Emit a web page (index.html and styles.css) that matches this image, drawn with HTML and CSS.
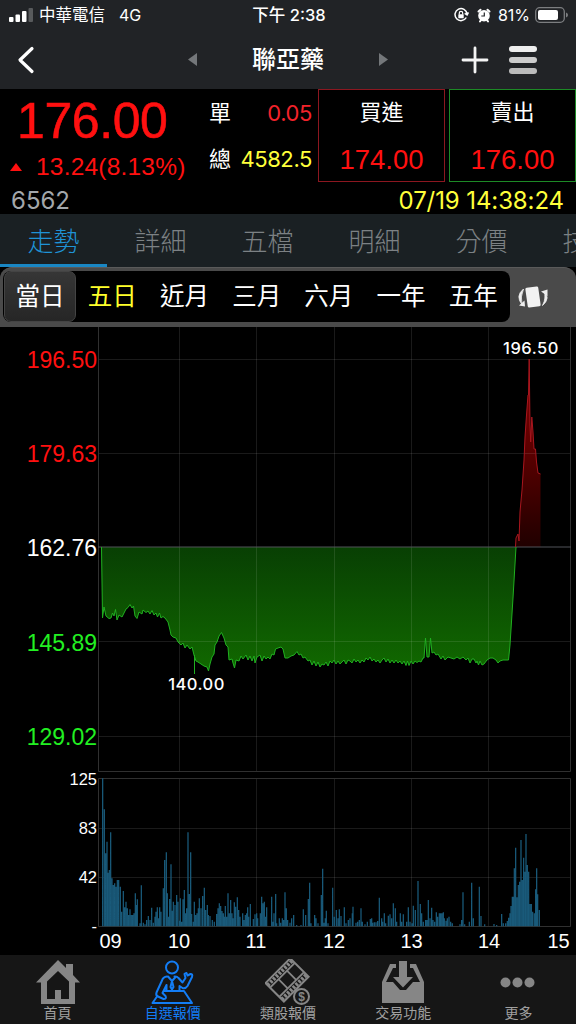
FILE: index.html
```
<!DOCTYPE html>
<html lang="zh-Hant">
<head>
  <meta charset="UTF-8">
  <meta name="viewport" content="width=device-width, initial-scale=1.0">
  <title>聯亞藥 6562</title>
  <link rel="stylesheet" href="styles.css">
</head>
<body>

<header class="top">
  <div class="status">
    <div class="status-left">
      <svg class="signal" viewBox="0 0 24 14" width="24" height="14">
        <rect x="0" y="9" width="4.5" height="5" rx="1"/>
        <rect x="6.5" y="6.500" width="4.500" height="7.500" rx="1"/>
        <rect x="13" y="3" width="4.500" height="11" rx="1"/>
        <rect x="19.500" y="0" width="4.500" height="14" rx="1" opacity=".25"/>
      </svg>
      <span class="carrier">中華電信</span>
      <span class="network">4G</span>
    </div>
    <div class="clock">下午 2:38</div>
    <div class="status-right">
      <svg width="16" height="16" viewBox="0 0 16 16" fill="none" stroke="#fff" stroke-width="1.5">
        <path d="M13.300 10.500A6 6 0 1 1 14 7M11.700 6.300l2.400 1.700 1.300-2.600"/>
        <path d="M6.300 7.500V6a1.700 1.700 0 0 1 3.400 0v1.500" stroke-width="1.200"/>
        <rect x="5.300" y="7.300" width="5.400" height="4" rx=".6" fill="#fff" stroke="none"/>
      </svg>
      <svg class="alarm" width="14" height="15" viewBox="0 0 14 15">
        <circle cx="7" cy="7.700" r="5.800" fill="#fff"/>
        <path d="M1.500 3.500 3.500 1.700M12.500 3.500l-2-1.800M3 13.500l1-1.500M11 13.500l-1-1.500" stroke="#fff" stroke-width="2" stroke-linecap="round"/>
        <path d="M7.300 4.500V8H4.300" fill="none" stroke="#212326" stroke-width="1.200"/>
      </svg>
      <span class="percent">81%</span>
      <svg width="34" height="16" viewBox="0 0 34 16">
        <rect x=".7" y=".7" width="28.600" height="14.600" rx="4" fill="none" stroke="#7c7e80" stroke-width="1.300"/>
        <rect x="3" y="3" width="20" height="10" rx="2" fill="#fff"/>
        <path d="M31 5.500q2 .6 2 2.500t-2 2.500z" fill="#7c7e80"/>
      </svg>
    </div>
  </div>
  <nav class="title-bar">
    <svg class="back" width="18" height="28" viewBox="0 0 18 28" fill="none" stroke="#fff" stroke-width="3.200" stroke-linecap="round" stroke-linejoin="round"><path d="M15 2.500 3 14l12 11.500"/></svg>
    <div class="stock-switch">
      <svg width="10" height="14" viewBox="0 0 10 14" fill="#74777a"><path d="M9 0v13L0 6.500z"/></svg>
      <h1>聯亞藥</h1>
      <svg width="10" height="14" viewBox="0 0 10 14" fill="#74777a"><path d="M1 0v13l9-6.500z"/></svg>
    </div>
    <div class="actions">
      <svg width="28" height="28" viewBox="0 0 28 28" stroke="#f4f4f4" stroke-width="2.800" stroke-linecap="round"><path d="M14 2v24M2 14h24"/></svg>
      <svg width="28" height="28" viewBox="0 0 28 28">
        <rect width="28" height="6" rx="3" fill="#eee"/>
        <rect y="11" width="28" height="6" rx="3" fill="#ccc"/>
        <rect y="22" width="28" height="6" rx="3" fill="#bbb"/>
      </svg>
    </div>
  </nav>
</header>

<section class="quote">
  <div class="last">
    <div class="price">176.00</div>
    <div class="change">
      <svg width="12" height="8" viewBox="0 0 12 8" fill="#ff1010"><path d="M6 0l6 8H0z"/></svg>
      <span>13.24(8.13%)</span>
    </div>
  </div>
  <dl class="volume">
    <dt>單</dt><dd class="single">0.05</dd>
    <dt>總</dt><dd class="total">4582.5</dd>
  </dl>
  <div class="deal buy"><span>買進</span><b>174.00</b></div>
  <div class="deal sell"><span>賣出</span><b>176.00</b></div>
  <div class="code">6562</div>
  <div class="time">07/19 14:38:24</div>
</section>

<nav class="tabs">
  <a class="active">走勢</a><a>詳細</a><a>五檔</a><a>明細</a><a>分價</a><a>技術</a>
</nav>

<div class="range-bar">
  <div class="ranges">
    <a class="selected">當日</a><a class="yellow">五日</a><a>近月</a><a>三月</a><a>六月</a><a>一年</a><a>五年</a>
  </div>
  <svg class="rotate" width="32" height="24" viewBox="0 0 32 24">
    <rect x="9.500" y="2" width="13" height="20" rx="1.500" fill="#f2f2f2" transform="rotate(-8 16 12)"/>
    <path d="M6.500 4Q-2 11 5 19.500Q3 12 6.500 4zM25.500 20.500Q34 13 27 6Q29.500 13 25.500 20.500z" fill="#eee" stroke="#eee" stroke-width=".8"/>
    <path d="M2 20.500 8 21.500l-.5-6zM24 6.500l6.500-2L30.500 11z" fill="#eee"/>
  </svg>
</div>

<svg class="chart" width="576" height="628" viewBox="0 327 576 628">
  <defs>
    <linearGradient id="down" x1="0" y1="547" x2="0" y2="672" gradientUnits="userSpaceOnUse">
      <stop offset="0" stop-color="#083f03"/>
      <stop offset="1" stop-color="#116900"/>
    </linearGradient>
    <linearGradient id="up" x1="0" y1="359" x2="0" y2="547" gradientUnits="userSpaceOnUse">
      <stop offset="0" stop-color="#8a0000"/>
      <stop offset=".6" stop-color="#4e0000"/>
      <stop offset="1" stop-color="#200000"/>
    </linearGradient>
  </defs>

  <path id="down-fill" fill="url(#down)"/>
  <path id="up-fill" fill="url(#up)"/>
  <path class="grid" d="M98 359.500h472M98 453.500h472M98 641.500h472M98 736.500h472M179.500 327v444M256.500 327v444M334.500 327v444M411.500 327v444M488.500 327v444"/>
  <path class="grid" d="M98 828.500h472M98 877.500h472M179.500 778v148M256.500 778v148M334.500 778v148M411.500 778v148M488.500 778v148"/>
  <path class="frame" d="M98.500 327v444.500h472V327M98.500 778.500h472v148h-472z"/>
  <path class="base" d="M98 547h473"/>
  <path id="down-line" class="line green"/>
  <path id="up-line" class="line dark-red"/>
  <path id="bars" transform="translate(90 770) scale(.33333)"/>

  <g class="scale">
    <text x="97" y="367.500" class="red">196.50</text>
    <text x="97" y="461.500" class="red">179.63</text>
    <text x="97" y="556">162.76</text>
    <text x="97" y="650.500" class="lime">145.89</text>
    <text x="97" y="744.500" class="lime">129.02</text>
  </g>
  <g class="mark">
    <text x="531" y="354">196.50</text>
    <text x="196.500" y="689.500">140.00</text>
  </g>
  <g class="volume-scale">
    <text x="97" y="785">125</text>
    <text x="97" y="834">83</text>
    <text x="97" y="883">42</text>
    <text x="97" y="932">-</text>
  </g>
  <g class="hours">
    <text x="110.500" y="948">09</text>
    <text x="179" y="948">10</text>
    <text x="256" y="948">11</text>
    <text x="334" y="948">12</text>
    <text x="411.500" y="948">13</text>
    <text x="489" y="948">14</text>
    <text x="558.500" y="948">15</text>
  </g>
</svg>

<footer class="menu">
  <a>
    <svg width="46" height="46" viewBox="0 0 46 46">
      <path d="M23 1 1 23.500h5V45h34V23.500h5L38 16V5h-7v4zM23 12l11 10.500V40h-8v-9h-6v9h-8V22.500z" fill="#868686" fill-rule="evenodd"/>
    </svg>
    <span>首頁</span>
  </a>
  <a class="on">
    <svg width="46" height="46" viewBox="0 0 46 46" fill="none" stroke="#137df5" stroke-width="2" stroke-linejoin="round" stroke-linecap="round">
      <circle cx="22" cy="8.500" r="6"/>
      <path d="M17 17.500q-4 .5-5 4L6.500 33.500q-1 3 1.500 4l5.500 2.500q3.500 0 2-3l-3-3 4-8V32h13v-5l3 2q3 1 5-2l4.500-9q1-3-1.500-3l-3 1.500-1-2.500-2 1 1 4-3 4.500-4-4.500q-1-1.500-4-1.500M18 17.500l4 4.500 4-4.500M22 22l-1.500 6 1.500 2.500 1.500-2.500z"/>
      <path d="M14.500 32H34l8 12H2.500L7 37.500"/>
    </svg>
    <span>自選報價</span>
  </a>
  <a>
    <svg width="46" height="46" viewBox="0 0 46 46">
      <g transform="rotate(-45 21 22)" fill="none" stroke="#868686">
        <rect x="5" y="9" width="35" height="26" stroke-width="2"/>
        <path d="M5 12h35M5 32h35" stroke-width="4" stroke-dasharray="2.500 1.500"/>
        <path d="M5 15.500h35M5 28.500h35M17 15v14M29 15v14" stroke-width="1.800"/>
      </g>
      <circle cx="36.500" cy="37.500" r="7.500" fill="#161616" stroke="#868686" stroke-width="2"/>
      <text x="36.500" y="42" class="coin">$</text>
    </svg>
    <span>類股報價</span>
  </a>
  <a>
    <svg width="46" height="46" viewBox="0 0 46 46" fill="#868686">
      <path d="M19 2h8v16h6L23 28.500 13 18h6z"/>
      <path d="M10 5h6v4h-3L6 23h7l7 8h6l7-8h7L33 9h-3V5h6l8 18v21H2V23z"/>
    </svg>
    <span>交易功能</span>
  </a>
  <a>
    <svg width="46" height="46" viewBox="0 0 46 46" fill="#868686">
      <circle cx="10.500" cy="23.500" r="5"/><circle cx="22.500" cy="23.500" r="5"/><circle cx="34.500" cy="23.500" r="5"/>
    </svg>
    <span>更多</span>
  </a>
</footer>

<script src="chart.js"></script>
</body>
</html>
```
FILE: styles.css
```
* {
  box-sizing: border-box;
}
body {
  margin: 0;
  width: 576px;
  height: 1024px;
  overflow: hidden;
  display: flex;
  flex-direction: column;
  background: #000;
  color: #fff;
  font-family: "Liberation Sans", "Noto Sans CJK TC", sans-serif;
}
svg {
  display: block;
  flex: none;
}

/* status bar and title */
.top {
  height: 89px;
  background: #212326;
}
.status {
  height: 30px;
  padding: 0 7px 0 9px;
  display: grid;
  grid-template-columns: 1fr auto 1fr;
  align-items: center;
  font-family: Inter, "Noto Sans CJK TC", sans-serif;
  font-size: 16px;
  line-height: 30px;
}
.status-left,
.status-right {
  display: flex;
  align-items: center;
}
.status-right {
  justify-content: flex-end;
}
.signal {
  fill: #fff;
}
.carrier {
  margin-left: 6px;
  font-size: 16.5px;
}
.network {
  margin-left: 14px;
}
.clock {
  font-weight: 500;
  font-size: 16.5px;
}
.alarm {
  margin-left: 8px;
}
.percent {
  margin: 0 5px 0 7px;
}
.title-bar {
  height: 59px;
  padding: 0 39px 0 17px;
  display: grid;
  grid-template-columns: 171px 200px 1fr;
  align-items: center;
}
.stock-switch {
  display: flex;
  align-items: center;
  justify-content: space-between;
}
.stock-switch h1 {
  margin: 0;
  font-size: 24px;
  font-weight: 500;
  line-height: 58px;
}
.actions {
  display: flex;
  justify-content: flex-end;
  gap: 20px;
}

/* quote */
.quote {
  height: 125px;
  display: grid;
  grid-template-columns: 206px 112px 127px 131px;
  grid-template-rows: 93px 32px;
}
.last {
  display: flex;
  flex-direction: column;
  color: #ff1010;
}
.price {
  padding: 5px 0 0 17px;
  font-size: 50px;
  line-height: 54px;
  letter-spacing: -.4px;
  -webkit-text-stroke: .6px #ff1010;
}
.change {
  padding-left: 10px;
  display: flex;
  align-items: center;
  gap: 14px;
  font-size: 24.5px;
  line-height: 37px;
  letter-spacing: .2px;
}
.volume {
  margin: 0;
  padding: 0 6px 0 3px;
  display: grid;
  grid-template-columns: 22px 1fr;
  grid-template-rows: 47px 46px;
  align-items: center;
  font-size: 22px;
}
.volume dt {
  padding-bottom: 4px;
}
.volume dd {
  margin: 0;
  text-align: right;
  font-family: Inter, sans-serif;
  letter-spacing: -.4px;
}
.volume .single {
  color: #f3232b;
}
.volume .total {
  color: #ffff3a;
}
.deal {
  border: 1px solid #8c1720;
  display: flex;
  flex-direction: column;
  align-items: center;
  font-size: 22px;
}
.deal.sell {
  margin-left: 4px;
  border-color: #1d8a26;
}
.deal span {
  line-height: 46px;
}
.deal b {
  font-size: 27.5px;
  font-weight: normal;
  line-height: 48px;
  color: #ff1010;
}
.code,
.time {
  font-family: Inter, sans-serif;
  font-size: 24px;
  line-height: 38px;
}
.code {
  padding-left: 11px;
  color: #a3a7ab;
}
.time {
  grid-column: 2 / 5;
  padding-right: 12px;
  text-align: right;
  letter-spacing: -.1px;
  color: #ffff3a;
}

/* page tabs */
.tabs {
  height: 53px;
  display: flex;
  overflow: hidden;
  background: #1a2023;
}
.tabs a {
  flex: none;
  width: 107px;
  height: 53px;
  font-size: 26px;
  font-weight: 300;
  line-height: 56px;
  text-align: center;
  color: #7c8184;
}
.tabs .active {
  border-bottom: 3px solid #1a87c4;
  color: #1f93d6;
}

/* chart range */
.range-bar {
  height: 60px;
  padding: 3px 0 5px 3px;
  display: flex;
  border-radius: 12px 12px 0 0;
  border-top: 1px solid #5a5a5a;
  background: #4a4a4a;
}
.ranges {
  width: 507px;
  height: 51px;
  display: flex;
  border-radius: 8px;
  background: #000;
}
.ranges a {
  width: 72.200px;
  font-size: 24.5px;
  line-height: 51px;
  text-align: center;
}
.ranges .selected {
  margin-left: 1px;
  border: 1px solid #444;
  border-radius: 7px;
  background: linear-gradient(#363636, #262626);
  line-height: 49px;
}
.ranges .yellow {
  color: #ffff2a;
}
.rotate {
  margin: 14px 0 0 7px;
}

/* charts */
.grid,
.frame,
.base,
.line {
  fill: none;
}
.grid {
  stroke: rgba(255, 255, 255, .1);
}
.frame {
  stroke: #303030;
}
.base {
  stroke: #505258;
}
.line {
  stroke-width: 1;
}
.green {
  stroke: #20b020;
}
.dark-red {
  stroke: #a8161e;
}
#bars {
  stroke: #195a7a;
  stroke-width: 3.8;
}
.scale {
  font-size: 23px;
  fill: #fff;
  text-anchor: end;
}
.scale .red {
  fill: #ff1010;
}
.scale .lime {
  fill: #22f022;
}
.mark {
  font-family: Inter, sans-serif;
  font-size: 16.5px;
  font-weight: 500;
  letter-spacing: .5px;
  fill: #fff;
  text-anchor: middle;
}
.volume-scale {
  font-size: 16.5px;
  fill: #fff;
  text-anchor: end;
}
.hours {
  font-size: 20px;
  fill: #fff;
  text-anchor: middle;
}

/* bottom menu */
.menu {
  height: 69px;
  padding-top: 4px;
  display: grid;
  grid-template-columns: repeat(5, 1fr);
  background: #161616;
}
.menu a {
  display: flex;
  flex-direction: column;
  align-items: center;
  font-size: 14px;
  line-height: 16px;
  color: #a0a0a0;
}
.menu .on {
  color: #137df5;
}
.coin {
  font-size: 12px;
  font-weight: bold;
  fill: #868686;
  text-anchor: middle;
}
```
FILE: chart.js
```
// y of the reference price
const base = 547;

const below = `101.5,547 102.5,618 104,607 106,616 109,618.5 111,618 112.5,613 114,616 115.5,609.5 117,620 119,615 122,617
124,613 126,609 128,607.5 130,604.5 132,608 133.5,606 135,616 137,618.5 139,612 142,614 143,610 146,612.5 148,611 150,614
152,610.5 154,615 156,613 157.5,617 159.5,613 161,618 163,616.5 165,618 168,622 170,630 171,635 173,637 176,638 178,642
181,645 183,643 185,648 187,645 190,649 192,647 194,655 196,661 198,662 201,664 204,666 207,667 208.5,671 210,664 212,657
214,654 215,645 217,642 219,636 221.5,632.5 224,638 226,645 228,647 229,660 232,659 233,663 234.5,668 236,660 239,661
241,656 243,659 246,655 248,660 250,656 252,661 254,656 255,663 257,657 260,655 262,661 264,656 266,659 268,657 270,659
272,654 274,655 275.5,649 278,648 281,647 283,649 285,658 288,658 291,656 294,655 297,651.5 299,655 301,654 303,658
305,657 308,661 310,660 312,665 314,661 316,666 318,662 320,667 322,664 324,665 326,662 328,666 330,661 332,663 334,660
336,664 338,661 340,664 342,662 344,660 346,664 348,660 350,661 352,663 354,659 356,662 358,660 360,663 362,660 364,662
366,658 368,660 370,657 372,661 374,659 376,662 378,660 380,663 382,660 384,658 386,662 388,659 390,663 392,660 394,663
396,660 398,663 400,661 402,664 404,661 406,665.5 407.5,661 409,665.5 411,661 413,664 415,661 417,662.5 419,661 421,662
423,658 424,658 425.5,638 427,657 429,657 430.5,638 432,653 434,652 436,655 438,654 441,659 443,656 445,660 448,657
451,658 454,659 457,657 460,659 463,657 466,660 468,658 470,663 472,659 474,659 476,663 477,661 478.5,665 480,661
482,665 484,664 487,660 490,658 493,658 496,660 498,663 500,661 503,660 508.5,660 510,645 513,598 516,547`;

const above = `515.5,547 516,538 518,534 519,541 520,512 522,490 524,460 525,437 526.5,415 528,395 528.5,395 529.2,359
530,425 530.7,442 531.8,417 533,432 534,449 535.5,449 536.5,462 538,473 540.5,474`;

function setPath(id, d) {
  document.getElementById(id).setAttribute('d', d);
}

setPath('down-fill', 'M' + below + 'V' + base + 'Z');
// the extra tick marks the low of the day
setPath('down-line', 'M' + below + 'M194.5,655V674');
setPath('up-line', 'M' + above);
setPath('up-fill', 'M' + above + 'V' + base + 'Z');

// volume: x,top of every bar, bottom is 469
const volume = `38,25 43,118 47,250 51,215 54,308 58,300 62,187 66,325 70,345 74,340 78,350 82,330 86,330 91,350 95,425
100,363 104,412 108,395 112,415 116,435 120,418 124,435 128,435 132,430 136,370 139,405 142,388 154,346 150,460 160,458
165,463 170,450 175,438 180,450 185,413 190,458 195,440 198,425 202,412 206,445 209,412 213,425 220,355 224,270 229,247
232,370 236,440 239,387 243,283 247,422 250,395 255,405 260,375 264,395 269,452 271,385 275,455 279,388 283,360 287,430
290,415 294,187 298,372 302,247 305,432 310,455 313,395 317,435 321,430 325,415 328,385 333,415 338,378 343,353 347,420
352,405 355,435 360,438 367,450 373,455 380,432 384,415 388,400 392,408 396,423 400,430 403,440 406,408 410,440 414,370
418,430 422,390 426,430 429,445 433,397 437,410 442,382 446,420 450,440 458,430 462,450 466,435 470,430 473,412 476,440
481,402 490,447 495,433 500,430 503,445 511,430 515,380 519,400 523,395 527,440 530,412 545,380 549,455 552,430 557,372
560,460 568,445 572,458 577,445 581,450 585,367 589,415 593,450 600,458 605,445 611,435 620,465 633,465 640,418 647,435
655,387 659,338 663,460 674,435 678,445 684,460 694,375 698,296 702,458 706,445 709,422 714,460 728,353 733,440 739,420
744,445 748,418 753,438 763,412 768,460 775,450 780,445 787,430 789,410 798,458 803,455 808,450 813,415 817,455 825,463
832,455 841,447 845,445 848,458 853,457 858,457 863,453 868,383 875,445 878,455 883,430 887,460 895,437 900,433 905,445
910,400 916,415 920,455 931,430 935,455 940,433 950,455 955,412 960,455 966,460 970,407 976,420 984,333 991,402 995,430
1000,455 1007,450 1011,450 1015,390 1020,445 1025,413 1029,450 1034,455 1039,427 1043,440 1048,430 1052,430 1056,430
1060,427 1063,445 1068,452 1072,445 1077,440 1082,455 1087,460 1110,463 1115,450 1119,367 1124,463 1138,455 1145,338
1150,445 1168,350 1173,438 1184,463 1212,462 1220,465 1235,432 1240,460 1247,460 1252,453 1256,443 1260,430 1263,408
1267,380 1270,380 1273,295 1277,233 1281,382 1285,345 1289,335 1293,210 1297,330 1301,263 1305,305 1308,192 1312,285
1316,305 1320,402 1324,402 1328,425 1333,430 1337,358 1340,295 1343,373 1348,420`;

setPath('bars', volume.split(/\s+/).map(function (bar) {
  const [x, top] = bar.split(',');
  return 'M' + x + ' 469V' + top;
}).join(''));
```
